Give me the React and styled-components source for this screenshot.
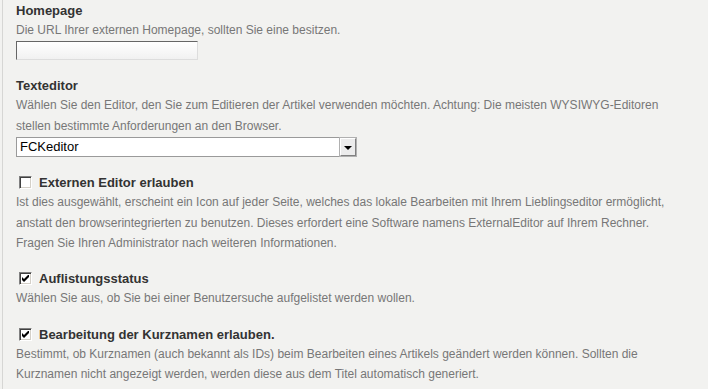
import React from 'react';
import styled, { createGlobalStyle } from 'styled-components';

const GlobalStyle = createGlobalStyle`
  html, body {
    margin: 0;
    padding: 0;
    background: #f2f2f0;
  }
  body {
    font-family: "Liberation Sans", Arial, sans-serif;
  }
`;

const Page = styled.div`
  margin-left: 2px;
  border-left: 1px solid #d6d6d4;
  padding: 3px 0 0 13px;
  min-height: 389px;
  box-sizing: border-box;
`;

const Section = styled.div`
  margin-bottom: 18px;
`;

const Heading = styled.div`
  display: flex;
  align-items: center;
  font-size: 13px;
  font-weight: bold;
  line-height: 15px;
  color: #333;
  padding-left: ${(p) => (p.$withBox ? '3px' : '0')};
`;

const Description = styled.div`
  margin-top: 2px;
  font-size: 12px;
  line-height: 20.4px;
  color: #777;
`;

const TextInput = styled.input`
  display: block;
  margin: 1px 0 0;
  width: 182px;
  height: 19px;
  box-sizing: border-box;
  border: 1px solid #ddd;
  border-top-color: #666;
  border-left-color: #666;
  background: linear-gradient(#ffffff, #f1f1f1);
  padding: 0 3px;
  outline: none;
`;

const SelectBox = styled.div`
  display: flex;
  margin: 1px 0 0;
  width: 341px;
  height: 20px;
  box-sizing: border-box;
  border: 1px solid #9a9a9a;
  background: #fff;
`;

const SelectValue = styled.div`
  flex: 1;
  font-size: 13px;
  line-height: 18px;
  color: #000;
  padding-left: 3px;
`;

const SelectButton = styled.div`
  width: 16px;
  display: flex;
  align-items: center;
  justify-content: center;
  box-sizing: border-box;
  background: #ececec;
  border: 1px solid #fff;
  border-right-color: #808080;
  border-bottom-color: #808080;
  outline: 1px solid #b0b0b0;
`;

const Arrow = styled.span`
  width: 0;
  height: 0;
  border-left: 4px solid transparent;
  border-right: 4px solid transparent;
  border-top: 4px solid #000;
  margin-top: 1px;
`;

const CheckBox = styled.span`
  display: inline-flex;
  align-items: center;
  justify-content: center;
  width: 13px;
  height: 13px;
  box-sizing: border-box;
  margin-right: 7px;
  background: #fff;
  border: 1px solid #fff;
  border-top-color: #808080;
  border-left-color: #808080;
  box-shadow: inset 1px 1px 0 #404040, inset -1px -1px 0 #d4d0c8;
`;

const Check = () => (
  <svg width="7" height="7" viewBox="0 0 7 7">
    <path d="M0 2v3l2 2l5-5v-3l-5 5z" fill="#000" />
  </svg>
);

const CheckHeading = ({ checked, children }) => (
  <Heading $withBox>
    <CheckBox>{checked && <Check />}</CheckBox>
    {children}
  </Heading>
);

export default function App() {
  return (
    <>
      <GlobalStyle />
      <Page>
        <Section>
          <Heading>Homepage</Heading>
          <Description>Die URL Ihrer externen Homepage, sollten Sie eine besitzen.</Description>
          <TextInput type="text" />
        </Section>

        <Section>
          <Heading>Texteditor</Heading>
          <Description>
            Wählen Sie den Editor, den Sie zum Editieren der Artikel verwenden möchten. Achtung: Die meisten WYSIWYG-Editoren
            <br />
            stellen bestimmte Anforderungen an den Browser.
          </Description>
          <SelectBox>
            <SelectValue>FCKeditor</SelectValue>
            <SelectButton>
              <Arrow />
            </SelectButton>
          </SelectBox>
        </Section>

        <Section>
          <CheckHeading>Externen Editor erlauben</CheckHeading>
          <Description>
            Ist dies ausgewählt, erscheint ein Icon auf jeder Seite, welches das lokale Bearbeiten mit Ihrem Lieblingseditor ermöglicht,
            <br />
            anstatt den browserintegrierten zu benutzen. Dieses erfordert eine Software namens ExternalEditor auf Ihrem Rechner.
            <br />
            Fragen Sie Ihren Administrator nach weiteren Informationen.
          </Description>
        </Section>

        <Section>
          <CheckHeading checked>Auflistungsstatus</CheckHeading>
          <Description>Wählen Sie aus, ob Sie bei einer Benutzersuche aufgelistet werden wollen.</Description>
        </Section>

        <Section>
          <CheckHeading checked>Bearbeitung der Kurznamen erlauben.</CheckHeading>
          <Description>
            Bestimmt, ob Kurznamen (auch bekannt als IDs) beim Bearbeiten eines Artikels geändert werden können. Sollten die
            <br />
            Kurznamen nicht angezeigt werden, werden diese aus dem Titel automatisch generiert.
          </Description>
        </Section>
      </Page>
    </>
  );
}
